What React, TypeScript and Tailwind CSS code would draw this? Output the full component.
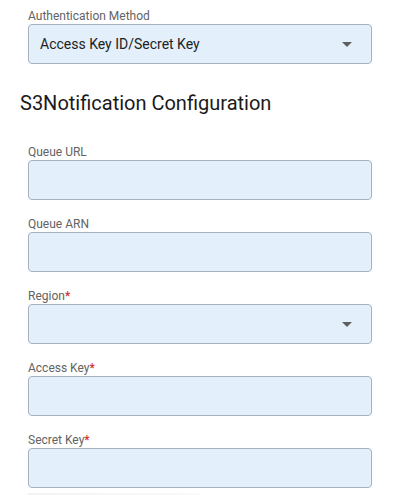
import React from "react";

type FieldProps = {
  label: string;
  required?: boolean;
  select?: boolean;
  value?: string;
};

function Field({ label, required, select, value }: FieldProps) {
  return (
    <div className="flex flex-col">
      <label className="text-[12px] leading-[16px] text-[#636363] h-4">
        {label}
        {required && <span className="text-[#d32f2f] font-medium">*</span>}
      </label>
      <div className="h-10 w-[344px] rounded-[4px] border border-[#a7b1bc] bg-[#e3f0fc] flex items-center pl-[11px] pr-3">
        <span className="flex-1 text-[14px] text-[#222]">{value}</span>
        {select && (
          <svg width="10" height="5" viewBox="0 0 10 5" className="mr-[7px]" aria-hidden>
            <path d="M0 0h10L5 5z" fill="#5f5f5f" />
          </svg>
        )}
      </div>
    </div>
  );
}

export default function App() {
  return (
    <div className="w-[404px] h-[495px] overflow-hidden bg-white font-['Roboto',sans-serif]">
      <div className="pl-7 pt-2">
        <Field label="Authentication Method" select value="Access Key ID/Secret Key" />
      </div>
      <h2 className="pl-5 pt-[25px] pb-[27px] text-[20px] leading-[28px] text-[#1a1a1a]">
        S3Notification Configuration
      </h2>
      <div className="pl-7 flex flex-col gap-4">
        <Field label="Queue URL" />
        <Field label="Queue ARN" />
        <Field label="Region" required select />
        <Field label="Access Key" required />
        <Field label="Secret Key" required />
      </div>
      <div className="ml-7 mt-[5px] h-1 w-[172px] bg-gradient-to-r from-[#f3f3f3] to-[#fafafa]" />
    </div>
  );
}
